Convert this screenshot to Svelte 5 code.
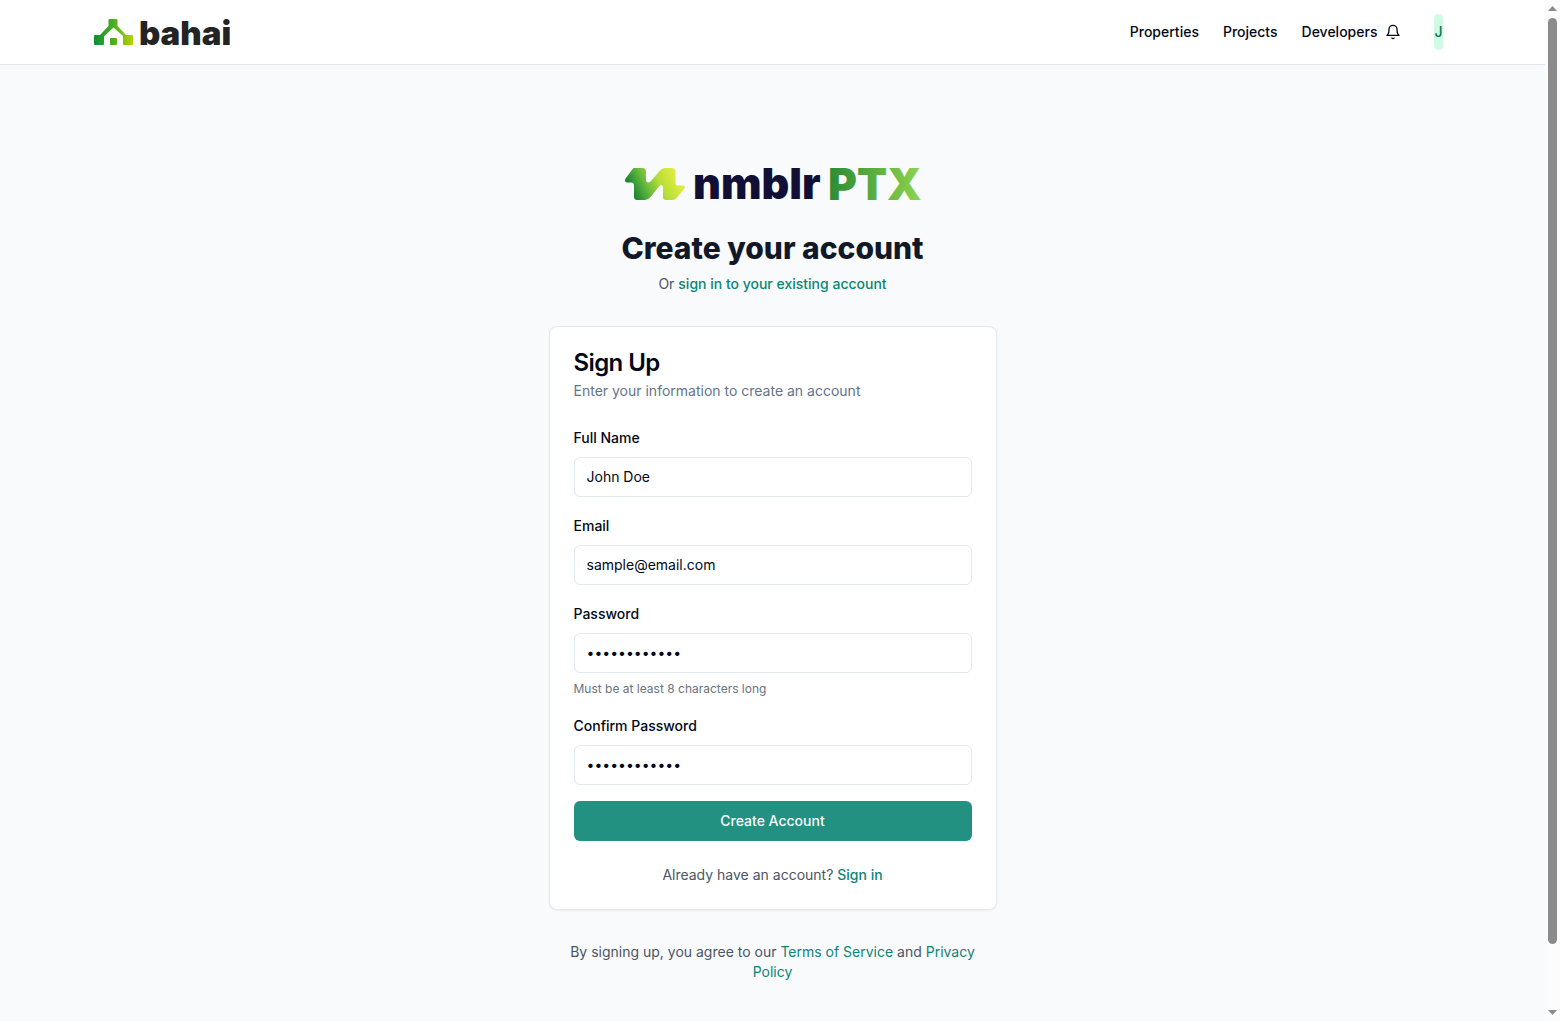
<script>
  let name = $state('John Doe');
  let email = $state('sample@email.com');
  let password = $state('password1234');
  let confirm = $state('password1234');
</script>

<div class="window">
  <div class="page">
    <header class="topbar">
      <div class="topbar-inner">
        <a class="brand" href="#home" aria-label="bahai home">
          <svg width="144" height="44" viewBox="0 -2 144 44">
            <defs>
              <linearGradient id="house" gradientUnits="userSpaceOnUse" x1="1" y1="0" x2="40" y2="0">
                <stop offset="0" stop-color="#0c8f35" />
                <stop offset="0.5" stop-color="#4caf20" />
                <stop offset="1" stop-color="#b9d300" />
              </linearGradient>
            </defs>
            <g fill="url(#house)">
              <path d="M16.500 7h7q1 0 1 1v6l8.500 9h6q1 0 1 1v8q0 1-1 1h-8q-1 0-1-1v-8L20.500 15.500 11 24.500V32q0 1-1 1H2q-1 0-1-1v-8q0-1 1-1h5l8.500-9V8q0-1 1-1z" />
              <rect x="17" y="26" width="7" height="7" rx="1" />
            </g>
            <text class="brand-text" x="46" y="33">bahai</text>
          </svg>
        </a>
        <div class="right">
          <nav class="links">
            <a href="#properties">Properties</a>
            <a href="#projects">Projects</a>
            <a href="#developers">Developers</a>
          </nav>
          <button class="bell" type="button" aria-label="Notifications">
            <svg width="16" height="16" viewBox="0 0 24 24" fill="none" stroke="currentColor" stroke-width="2" stroke-linecap="round" stroke-linejoin="round">
              <path d="M6 8a6 6 0 0 1 12 0c0 7 3 9 3 9H3s3-2 3-9" />
              <path d="M10.300 21a1.940 1.940 0 0 0 3.400 0" />
            </svg>
          </button>
          <button class="avatar" type="button" aria-label="Account, J">J</button>
        </div>
      </div>
    </header>

    <main>
      <div class="column">
        <svg class="product" width="300" height="64" viewBox="1 -8 300 64" role="img" aria-label="nmblr PTX">
          <defs>
            <linearGradient id="mark" gradientUnits="userSpaceOnUse" x1="8" y1="36" x2="52" y2="14">
              <stop offset="0" stop-color="#08752f" />
              <stop offset="0.35" stop-color="#5db53c" />
              <stop offset="0.65" stop-color="#b5dc38" />
              <stop offset="1" stop-color="#dcec40" />
            </linearGradient>
            <linearGradient id="ptx" gradientUnits="userSpaceOnUse" x1="206" y1="0" x2="298" y2="0">
              <stop offset="0" stop-color="#2a8a34" />
              <stop offset="1" stop-color="#8ed24b" />
            </linearGradient>
          </defs>
          <path fill="url(#mark)" d="M12 8H20.500Q24 8 24 11.500V20Q24 22.500 26 22.500Q27.500 22.500 29 21L38 10.500Q40 8 43 8H49.500Q53.500 8 53.500 12V23Q53.500 25.500 56 25.500H60Q64 25.500 62.500 28.500L55 37.500Q53 40 50 40H44Q41 40 41 37V27.500Q41 25 39.500 25Q38 25 37 26.500L28.500 37Q26 40 23 40H15.500Q12 40 12 36.500V25.500Q12 22.500 9 22.500H5.500Q2 22.500 3.500 18.500L10 10Q11 8 12 8Z" />
          <text class="nmblr" x="71" y="39">nmblr</text>
          <text class="ptx" x="206" y="40" fill="url(#ptx)">PTX</text>
        </svg>
        <h1>Create your account</h1>
        <p class="sub">Or <a class="strong" href="#signin">sign in to your existing account</a></p>

        <section class="card">
          <h2>Sign Up</h2>
          <p class="description">Enter your information to create an account</p>
          <form onsubmit={(e) => e.preventDefault()}>
            <div class="field">
              <label for="name">Full Name</label>
              <input id="name" type="text" bind:value={name} />
            </div>
            <div class="field">
              <label for="email">Email</label>
              <input id="email" type="email" bind:value={email} />
            </div>
            <div class="field">
              <label for="password">Password</label>
              <input id="password" type="password" bind:value={password} />
              <p class="hint">Must be at least 8 characters long</p>
            </div>
            <div class="field">
              <label for="confirm">Confirm Password</label>
              <input id="confirm" type="password" bind:value={confirm} />
            </div>
            <button class="submit" type="submit">Create Account</button>
          </form>
          <p class="already">Already have an account? <a class="strong" href="#signin">Sign in</a></p>
        </section>

        <p class="legal">By signing up, you agree to our <a href="#terms">Terms of Service</a> and <a href="#privacy">Privacy Policy</a></p>
      </div>
    </main>
  </div>

  <div class="scrollbar" aria-hidden="true">
    <svg width="9" height="5" viewBox="0 0 9 5"><path d="M4.500 0L9 5H0z" /></svg>
    <div class="track"><div class="thumb"></div></div>
    <svg width="9" height="5" viewBox="0 0 9 5"><path d="M4.500 5L9 0H0z" /></svg>
  </div>
</div>

<style>
  :global(body) {
    margin: 0;
    background: #f8fafc;
  }
  .window {
    display: flex;
    min-height: 100vh;
    font-family: Inter, "Liberation Sans", sans-serif;
    font-size: 14px;
    line-height: 20px;
    color: #020817;
  }
  .window :is(h1, h2, p) {
    margin: 0;
  }
  .page {
    flex: 1;
    min-width: 0;
  }
  a {
    color: #0d8573;
    text-decoration: none;
  }
  .strong {
    font-weight: 500;
  }
  .topbar {
    background: #fff;
    border-bottom: 1px solid #e2e8f0;
  }
  .topbar-inner {
    box-sizing: border-box;
    max-width: 1400px;
    height: 64px;
    margin: 0 auto;
    padding: 0 30px 0 20px;
    display: flex;
    align-items: center;
    justify-content: space-between;
  }
  .brand {
    display: flex;
  }
  .brand-text {
    font-size: 33px;
    font-weight: 900;
    fill: #242424;
  }
  .right {
    display: flex;
    align-items: center;
  }
  .links {
    display: flex;
    gap: 24px;
  }
  .links a {
    color: #020817;
    font-weight: 500;
  }
  .bell {
    display: flex;
    margin: 0 33px 0 8px;
    padding: 0;
    border: 0;
    background: none;
    color: #020817;
  }
  .avatar {
    height: 36px;
    padding: 0;
    border: 0;
    border-radius: 18px;
    background: #d1fae5;
    color: #047857;
    font: inherit;
    font-weight: 500;
  }
  main {
    padding: 87px 16px 32px;
  }
  .column {
    max-width: 448px;
    margin: 0 auto;
    text-align: center;
  }
  .product {
    display: block;
    margin: 0 auto;
  }
  .nmblr {
    font-size: 43px;
    font-weight: 900;
    fill: #110f35;
  }
  .ptx {
    font-size: 44px;
    font-weight: 900;
  }
  h1 {
    padding-top: 14px;
    font-size: 30px;
    line-height: 36px;
    font-weight: 800;
    color: #111827;
  }
  .sub,
  .already,
  .legal {
    color: #4b5563;
  }
  .sub {
    padding-top: 8px;
  }
  .card {
    margin-top: 32px;
    padding: 24px;
    border: 1px solid #e2e8f0;
    border-radius: 8px;
    background: #fff;
    box-shadow: 0 1px 2px rgba(0, 0, 0, 0.05);
    text-align: left;
  }
  h2 {
    font-size: 24px;
    line-height: 24px;
    font-weight: 600;
    letter-spacing: -0.025em;
  }
  .card .description {
    margin-top: 6px;
    color: #64748b;
  }
  form {
    margin-top: 24px;
    display: grid;
    gap: 16px;
  }
  .field {
    display: grid;
    gap: 8px;
  }
  label {
    padding-top: 2px;
    line-height: 22px;
    font-weight: 500;
  }
  input {
    box-sizing: border-box;
    width: 100%;
    height: 40px;
    padding: 8px 12px 10px;
    border: 1px solid #e2e8f0;
    border-radius: 6px;
    background: #fff;
    color: #020817;
    font: inherit;
  }
  .hint {
    font-size: 12px;
    line-height: 16px;
    color: #6b7280;
  }
  .submit {
    height: 40px;
    border: 0;
    border-radius: 6px;
    background: #239181;
    color: #f8fafc;
    font: inherit;
    font-weight: 500;
  }
  .card .already {
    margin-top: 24px;
    text-align: center;
  }
  .legal {
    padding: 32px 16px 0;
  }
  .scrollbar {
    position: sticky;
    top: 0;
    box-sizing: border-box;
    width: 15px;
    height: 100vh;
    padding: 6px 0;
    display: flex;
    flex-direction: column;
    align-items: center;
    gap: 7px;
    background: #fcfcfc;
  }
  .scrollbar svg {
    fill: #8b8b8b;
  }
  .track {
    flex: 1;
  }
  .thumb {
    width: 9px;
    height: 94%;
    border-radius: 5px;
    background: #8b8b8b;
  }
</style>
